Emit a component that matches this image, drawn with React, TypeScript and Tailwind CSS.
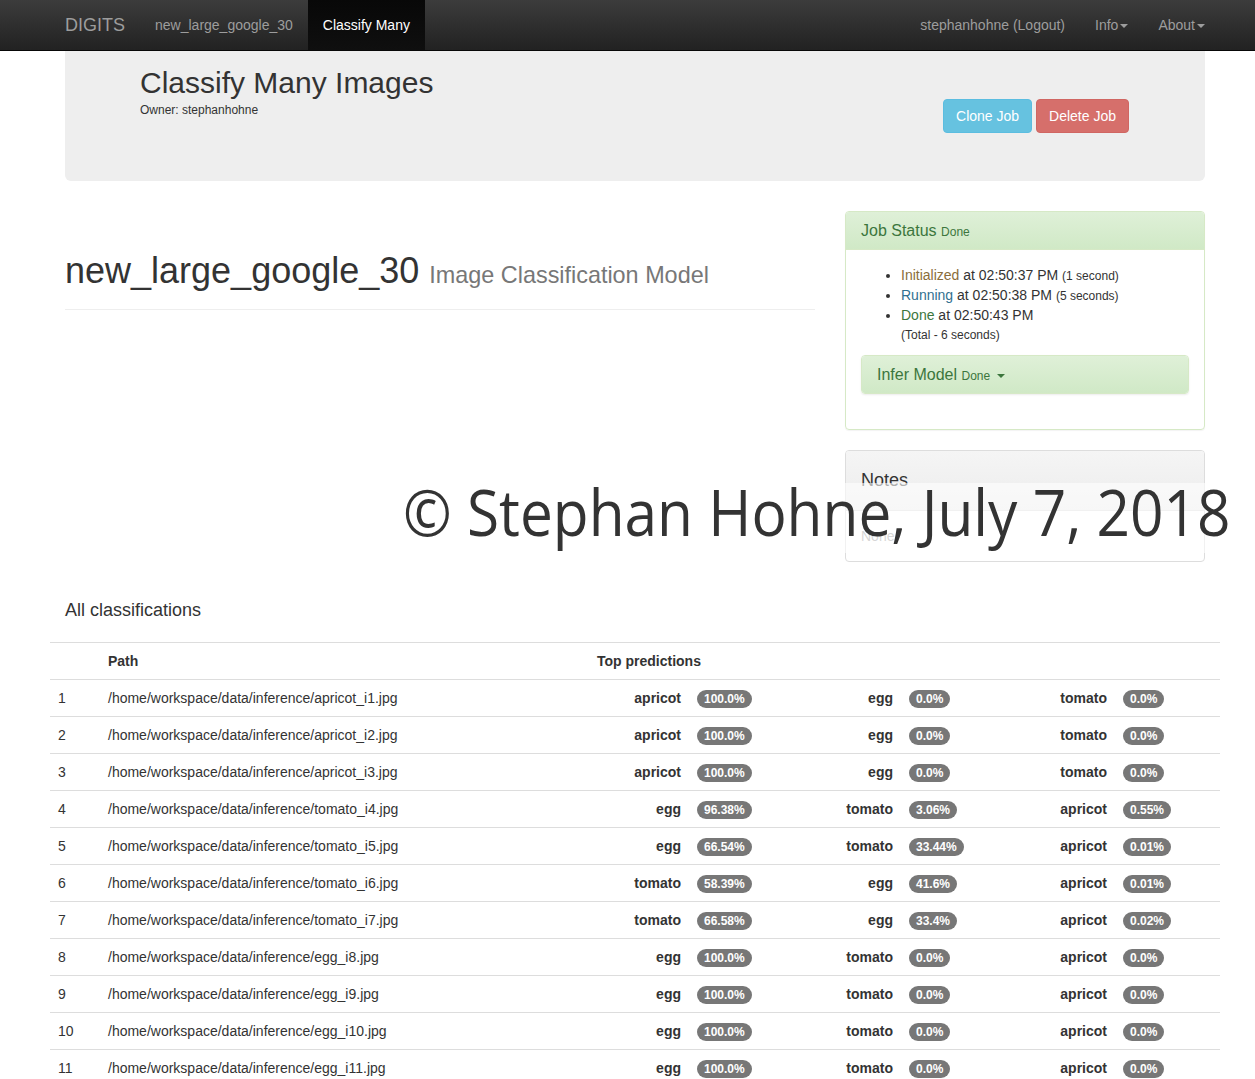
import React from "react";

type Pred = [string, string];
const rows: { path: string; preds: Pred[] }[] = [
  { path: "/home/workspace/data/inference/apricot_i1.jpg", preds: [["apricot", "100.0%"], ["egg", "0.0%"], ["tomato", "0.0%"]] },
  { path: "/home/workspace/data/inference/apricot_i2.jpg", preds: [["apricot", "100.0%"], ["egg", "0.0%"], ["tomato", "0.0%"]] },
  { path: "/home/workspace/data/inference/apricot_i3.jpg", preds: [["apricot", "100.0%"], ["egg", "0.0%"], ["tomato", "0.0%"]] },
  { path: "/home/workspace/data/inference/tomato_i4.jpg", preds: [["egg", "96.38%"], ["tomato", "3.06%"], ["apricot", "0.55%"]] },
  { path: "/home/workspace/data/inference/tomato_i5.jpg", preds: [["egg", "66.54%"], ["tomato", "33.44%"], ["apricot", "0.01%"]] },
  { path: "/home/workspace/data/inference/tomato_i6.jpg", preds: [["tomato", "58.39%"], ["egg", "41.6%"], ["apricot", "0.01%"]] },
  { path: "/home/workspace/data/inference/tomato_i7.jpg", preds: [["tomato", "66.58%"], ["egg", "33.4%"], ["apricot", "0.02%"]] },
  { path: "/home/workspace/data/inference/egg_i8.jpg", preds: [["egg", "100.0%"], ["tomato", "0.0%"], ["apricot", "0.0%"]] },
  { path: "/home/workspace/data/inference/egg_i9.jpg", preds: [["egg", "100.0%"], ["tomato", "0.0%"], ["apricot", "0.0%"]] },
  { path: "/home/workspace/data/inference/egg_i10.jpg", preds: [["egg", "100.0%"], ["tomato", "0.0%"], ["apricot", "0.0%"]] },
  { path: "/home/workspace/data/inference/egg_i11.jpg", preds: [["egg", "100.0%"], ["tomato", "0.0%"], ["apricot", "0.0%"]] },
];

function Caret() {
  return (
    <span className="inline-block ml-[2px] w-0 h-0 align-middle border-t-[4px] border-t-current border-x-[4px] border-x-transparent" />
  );
}

function Badge({ children }: { children: React.ReactNode }) {
  return (
    <span className="inline-block align-top mt-[2px] bg-[#777] text-white text-[12px] font-bold leading-[12px] px-[7px] py-[3px] rounded-[10px]">
      {children}
    </span>
  );
}

export default function App() {
  return (
    <div className="relative min-h-screen bg-white font-['Liberation_Sans',Arial,sans-serif] text-[14px] leading-[20px] text-[#333]">
      {/* Navbar */}
      <nav className="h-[51px] border-b border-[#080808] bg-gradient-to-b from-[#3c3c3c] to-[#222]">
        <div className="ml-[50px] w-[1170px] flex h-[50px]">
          <a className="px-[15px] text-[18px] leading-[50px] text-[#9d9d9d]">DIGITS</a>
          <a className="px-[15px] leading-[50px] text-[#9d9d9d]">new_large_google_30</a>
          <a className="px-[15px] leading-[50px] text-white bg-gradient-to-b from-[#080808] to-[#0f0f0f]">Classify Many</a>
          <div className="ml-auto flex">
            <a className="px-[15px] leading-[50px] text-[#9d9d9d]">stephanhohne (Logout)</a>
            <a className="px-[15px] leading-[50px] text-[#9d9d9d]">
              Info
              <Caret />
            </a>
            <a className="px-[15px] leading-[50px] text-[#9d9d9d]">
              About
              <Caret />
            </a>
          </div>
        </div>
      </nav>

      <div className="ml-[50px] w-[1170px] px-[15px]">
        {/* Jumbotron */}
        <div className="h-[130px] bg-[#eee] rounded-b-[6px] flex justify-between">
          <div className="pl-[75px] pt-[15px]">
            <h1 className="text-[30px] leading-[33px]">Classify Many Images</h1>
            <div className="text-[12px] leading-[17px] mt-[3px]">Owner: stephanhohne</div>
          </div>
          <div className="self-center pr-[76px] flex gap-[4px]">
            <button className="px-[12px] py-[6px] border border-[#5bbde0] bg-[#66c2e0] text-white rounded-[4px] leading-[20px]">
              Clone Job
            </button>
            <button className="px-[12px] py-[6px] border border-[#d06662] bg-[#d66f6b] text-white rounded-[4px] leading-[20px]">
              Delete Job
            </button>
          </div>
        </div>

        {/* Main row */}
        <div className="mt-[30px] flex items-start gap-[30px]">
          <div className="w-[750px]">
            <div className="mt-[40px] pb-[9px] border-b border-[#eee]">
              <h1 className="text-[36px] leading-[39px] mb-[10px]">
                new_large_google_30{" "}
                <span className="text-[23.4px] leading-none text-[#777]">Image Classification Model</span>
              </h1>
            </div>
          </div>
          <div className="w-[360px]">
            {/* Job status */}
            <div className="border border-[#d6e9c6] rounded-[4px] mb-[20px] shadow-[0_1px_1px_rgba(0,0,0,0.05)]">
              <div className="px-[15px] py-[10px] bg-gradient-to-b from-[#dff0d8] to-[#d0e9c6] border-b border-[#d6e9c6] rounded-t-[3px] text-[#3c763d]">
                <div className="text-[16px] leading-[17px]">
                  Job Status <span className="text-[12px] leading-none">Done</span>
                </div>
              </div>
              <div className="p-[15px]">
                <ul className="list-disc pl-[40px] mb-[10px]">
                  <li className="h-[20px]">
                    <span className="text-[#8a6d3b]">Initialized</span> at 02:50:37 PM{" "}
                    <span className="text-[12px] leading-none">(1 second)</span>
                  </li>
                  <li className="h-[20px]">
                    <span className="text-[#31708f]">Running</span> at 02:50:38 PM{" "}
                    <span className="text-[12px] leading-none">(5 seconds)</span>
                  </li>
                  <li className="h-[20px]">
                    <span className="text-[#3c763d]">Done</span> at 02:50:43 PM
                  </li>
                  <li className="h-[20px] list-none text-[12px]">(Total - 6 seconds)</li>
                </ul>
                <div className="border border-[#d6e9c6] rounded-[4px] mb-[20px] shadow-[0_1px_2px_rgba(0,0,0,0.08)]">
                  <div className="h-[37px] px-[15px] py-[10px] bg-gradient-to-b from-[#dff0d8] to-[#d0e9c6] rounded-[3px] text-[#3c763d]">
                    <div className="text-[16px] leading-[17px]">
                      Infer Model <span className="text-[12px] leading-none">Done</span> <Caret />
                    </div>
                  </div>
                </div>
              </div>
            </div>
            {/* Notes */}
            <div className="border border-[#ddd] rounded-[4px] mb-[20px]">
              <div className="px-[15px] py-[10px] bg-gradient-to-b from-[#f5f5f5] to-[#ececec] border-b border-[#ddd] rounded-t-[3px]">
                <h4 className="text-[18px] leading-[19px] my-[10px]">Notes</h4>
              </div>
              <div className="p-[15px] text-[#999]">None</div>
            </div>
          </div>
        </div>

        <h4 className="mt-[18px] mb-[22px] text-[18px] leading-[20px]">All classifications</h4>

        <table className="-mx-[15px] w-[1170px] table-fixed border-collapse">
          <colgroup>
            <col className="w-[50px]" />
            <col className="w-[489px]" />
            <col className="w-[100px]" />
            <col className="w-[106px]" />
            <col className="w-[106px]" />
            <col className="w-[108px]" />
            <col className="w-[106px]" />
            <col className="w-[105px]" />
          </colgroup>
          <thead>
            <tr>
              <th className="p-[8px] border-t border-[#ddd] text-left"></th>
              <th className="p-[8px] border-t border-[#ddd] text-left font-bold">Path</th>
              <th colSpan={6} className="p-[8px] border-t border-[#ddd] text-left font-bold">Top predictions</th>
            </tr>
          </thead>
          <tbody>
            {rows.map((r, i) => (
              <tr key={i}>
                <td className="p-[8px] border-t border-[#ddd]">{i + 1}</td>
                <td className="p-[8px] border-t border-[#ddd]">{r.path}</td>
                {r.preds.map(([label, pct], j) => (
                  <React.Fragment key={j}>
                    <td className="p-[8px] border-t border-[#ddd] text-right font-bold">{label}</td>
                    <td className="p-[8px] border-t border-[#ddd]">
                      <Badge>{pct}</Badge>
                    </td>
                  </React.Fragment>
                ))}
              </tr>
            ))}
          </tbody>
        </table>
      </div>

      {/* Watermark overlay */}
      <div className="absolute left-[395px] top-[483px] w-[845px] h-[70px] bg-white/60" />
      <div className="absolute left-[403px] top-[480px] whitespace-nowrap origin-left scale-x-[0.915] font-['Open_Sans',sans-serif] text-[64px] leading-none text-[#333]">
        © Stephan Hohne, July 7, 2018
      </div>
    </div>
  );
}
